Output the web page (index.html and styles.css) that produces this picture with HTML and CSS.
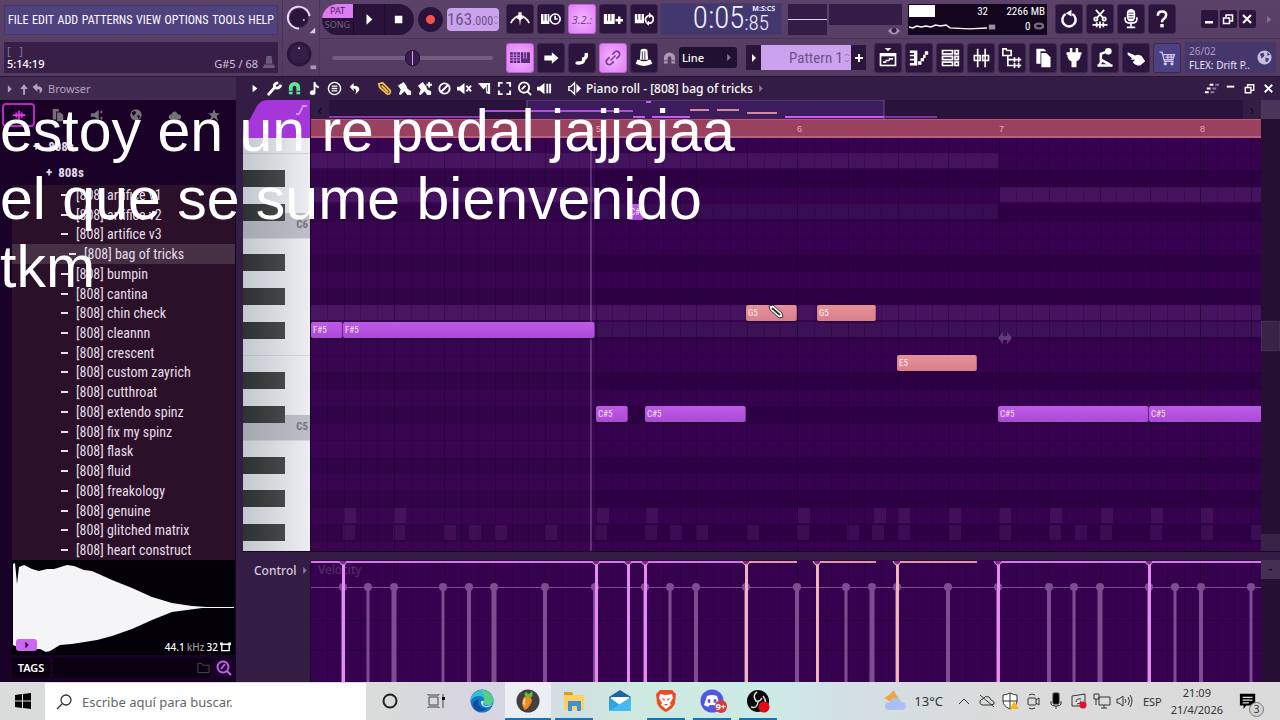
FILE: index.html
```
<!DOCTYPE html>
<html lang="es">
<head>
    <meta charset="utf-8">
    <title>Piano roll - [808] bag of tricks</title>
    <link rel="stylesheet" href="styles.css">
</head>
<body>
    <div class="desktop">
        <header class="toolbar">
            <div class="side">
                <nav class="menu">
                    <button>FILE</button><button>EDIT</button><button>ADD</button><button>PATTERNS</button><button>VIEW</button><button>OPTIONS</button><button>TOOLS</button><button>HELP</button>
                </nav>
                <div class="hint">
                    <div class="hint-brackets">[ &nbsp; ]</div>
                    <div class="hint-row">
                        <span class="hint-time">5:14:19</span>
                        <span>G#5 / 68</span>
                        <svg class="hint-hat" viewBox="0 0 14 18"><path d="M4 2h6l1 9H3zM1 12h12l1 4H0z"/></svg>
                    </div>
                </div>
            </div>
            <div class="knobs">
                <svg viewBox="0 0 38 38"><circle cx="17" cy="19" r="10" fill="#2a163d"/><path d="M17 30A11.500 11.500 0 1 1 28 17" fill="none" stroke="#e8dcf0" stroke-width="2"/><circle cx="22" cy="21" r="1" fill="#d9c9e6"/><path d="M34 29v6h-6z" fill="#d9c9e6"/></svg>
                <svg viewBox="0 0 38 38"><circle cx="17" cy="19" r="13" fill="#2a163d"/><circle cx="17" cy="19" r="10" fill="#341f47"/><circle cx="17" cy="13" r="1" fill="#d9c9e6"/><path d="M29 31h6v4h-6z" fill="#a593b5"/></svg>
            </div>
            <div class="main">
                <div class="row">
                    <div class="transport">
                        <div class="capsule">
                            <div class="mode"><button class="on">PAT</button><button>SONG</button></div>
                            <button aria-label="Play"><svg viewBox="0 0 24 24"><path d="M9 6l7 6.500L9 19z"/></svg></button>
                            <button aria-label="Stop"><svg viewBox="0 0 24 24"><path d="M7 8h9v9H7z"/></svg></button>
                        </div>
                        <button class="record" aria-label="Record"></button>
                        <button class="tempo" aria-label="Tempo">163<small>.000</small><svg viewBox="0 0 6 10"><path d="M1 3l2-2 2 2M1 7l2 2 2-2"/></svg></button>
                    </div>
                    <div class="buttons">
                        <button aria-label="Metronome"><svg viewBox="0 0 24 24"><path d="M1 17q4-8 11-9 7 1 11 9" fill="none" stroke="#fff" stroke-width="2"/><path d="M10 4h4v5l2 2-3 2-1 7-1-7-3-2 2-2z"/></svg></button>
                        <button aria-label="Wait for input"><svg viewBox="0 0 24 24"><path d="M0 6h3v8h1V6h3v8h1V6h2v12H0z"/><circle cx="17" cy="12" r="6" fill="#2b153d" stroke="#fff" stroke-width="2"/><path d="M17 8v4h3" fill="none" stroke="#fff" stroke-width="2"/></svg></button>
                        <button class="on lcd" aria-label="Countdown">3.2.:</button>
                        <button aria-label="Overdub"><svg viewBox="0 0 24 24"><path d="M1 6h4v8h1V6h3v8h1V6h4v12H1zM18 9h3v3h3v3h-3v3h-3v-3h-3v-3h3z"/></svg></button>
                        <button aria-label="Loop record"><svg viewBox="0 0 24 24"><path d="M1 6h3v7h1V6h3v7h1V6h3v11H1z"/><path d="M15 16a5 5 0 0 1 2-8h2M21 8a5 5 0 0 1-2 9h-2" fill="none" stroke="#fff" stroke-width="2"/><path d="M18 4l4 4-4 3zM18 14v6l-4-3z"/></svg></button>
                    </div>
                    <div class="time"><span class="time-big">0:05</span><span class="time-small"><small>M:S:CS</small>:85</span></div>
                    <div class="scope"></div>
                    <div class="meter"><div></div><svg viewBox="0 0 14 10"><path d="M0 5q7-8 14 0-7 8-14 0z"/><circle cx="7" cy="4" r="3" fill="#35204a"/></svg></div>
                    <div class="cpu">
                        <div class="cpu-graph"><i></i><svg viewBox="0 0 82 14"><path d="M0 8l4 1 4-2 5 1 5-1 5 1 5-2 5 1 6-1 4 3 20 1 20-1" fill="none" stroke="#fff" stroke-width="1.500"/></svg></div>
                        <div class="cpu-nums"><span>32</span><span>2266 MB</span><svg viewBox="0 0 10 10"><path d="M1 2h8v6H1z"/></svg><span>0 <svg viewBox="0 0 14 10"><ellipse cx="7" cy="5" rx="5" ry="3" fill="none" stroke="#786a80" stroke-width="3"/></svg></span></div>
                    </div>
                    <div class="buttons">
                        <button aria-label="Undo"><svg viewBox="0 0 24 24"><path d="M8 6a8 8 0 1 0 8 0" fill="none" stroke="#fff" stroke-width="3"/><path d="M15 1v8L8 5z"/></svg></button>
                        <button aria-label="Cut"><svg viewBox="0 0 24 24"><path d="M7 1l9 10M17 1l-9 10" stroke="#fff" stroke-width="2"/><circle cx="7" cy="12" r="2" fill="none" stroke="#fff" stroke-width="2"/><circle cx="17" cy="12" r="2" fill="none" stroke="#fff" stroke-width="2"/><path d="M3 19h18M8 16v6M12 15v8M16 16v6" stroke="#fff" stroke-width="2"/></svg></button>
                        <button aria-label="Record audio"><svg viewBox="0 0 24 24"><rect x="7" y="0" width="10" height="15" rx="5"/><path d="M5 10v3q0 4 7 4t7-4v-3M12 17v4M7 22h10" fill="none" stroke="#fff" stroke-width="2"/><path d="M9 5h6M9 8h6M9 11h6" stroke="#2b153d"/></svg></button>
                        <button aria-label="Help"><svg viewBox="0 0 24 24"><path d="M7 8q0-5 5-5t5 4q0 3-3 5-2 1-2 4" fill="none" stroke="#fff" stroke-width="3"/><path d="M10 18h4v4h-4z"/></svg></button>
                    </div>
                    <div class="winbtns">
                        <button aria-label="Minimize"><svg viewBox="0 0 16 16"><path d="M4 10h8v2.500H4z"/></svg></button>
                        <button aria-label="Restore"><svg viewBox="0 0 16 16"><path d="M3.500 7h6v5.500h-6zM6 6V4h6.500v6H10" fill="none" stroke="#fff" stroke-width="1.500"/></svg></button>
                        <button aria-label="Close"><svg viewBox="0 0 16 16"><path d="M4 4l8 8M12 4l-8 8" stroke="#fff" stroke-width="2"/></svg></button>
                    </div>
                    <svg class="more" viewBox="0 0 6 10"><path d="M1 1l4 4-4 4z"/></svg>
                </div>
                <div class="row">
                    <div class="transport"><input class="pitch" type="range" aria-label="Song position" value="50"></div>
                    <div class="buttons">
                        <button class="on" aria-label="Typing keyboard"><svg viewBox="0 0 24 24"><path d="M0 5h12v13H0zM13 5h3v8h1V5h2v8h1V5h4v13H13z" fill="#5a2a80"/><path d="M0 8.500h12M0 11.500h12M0 14.500h12M4 5v13M8 5v13" stroke="#e48cf8"/></svg></button>
                        <button aria-label="Step mode"><svg viewBox="0 0 24 24"><path d="M4 9h9V5l8 7-8 7v-4H4z"/></svg></button>
                        <button aria-label="Slide"><svg viewBox="0 0 24 24"><path d="M8 18q7 0 6-5 4-1 3-7" fill="none" stroke="#fff" stroke-width="4"/><ellipse cx="7" cy="18" rx="3" ry="2"/></svg></button>
                        <button class="on" aria-label="Link"><svg viewBox="0 0 24 24"><path d="M9 15l6-6M11 8l3-3a3.500 3.500 0 0 1 5 5l-3 3M13 16l-3 3a3.500 3.500 0 0 1-5-5l3-3" fill="none" stroke="#7a3d9a" stroke-width="2"/></svg></button>
                        <button aria-label="Hat"><svg viewBox="0 0 24 24"><path d="M8 2q4-2 8 0l1 12H7z"/><path d="M4 14h2q6 4 12 0h2l2 5q-10 5-20 0z"/><path d="M10 4v10M13 4v10" stroke="#2b153d"/></svg></button>
                    </div>
                    <svg class="snap-icon" viewBox="0 0 14 14"><path d="M3 13V7a4 4 0 0 1 8 0v6" fill="none" stroke="#aa9ab8" stroke-width="4"/><path d="M1 10h4M9 10h4" stroke="#503a62"/></svg>
                    <label class="snap"><select aria-label="Snap"><option>Line</option></select><svg viewBox="0 0 6 10"><path d="M1 1l4 4-4 4z"/></svg></label>
                    <div class="pattern">
                        <button aria-label="Pattern menu"><svg viewBox="0 0 6 10"><path d="M1 1l4 4-4 4z"/></svg></button>
                        <select aria-label="Pattern"><option>Pattern 1</option></select>
                        <svg class="spin" viewBox="0 0 6 10"><path d="M1 3l2-2 2 2M1 7l2 2 2-2"/></svg>
                        <button aria-label="Add pattern"><svg class="plus" viewBox="0 0 8 8"><path d="M3 0h2v3h3v2H5v3H3V5H0V3h3z"/></svg></button>
                    </div>
                    <div class="buttons">
                        <button aria-label="Playlist"><svg viewBox="0 0 24 24"><path d="M8 0h8l-4 4zM2 6h20v16H2z"/><path d="M4 10h16v10H4z" fill="#2b153d"/><path d="M6 17h4M9 15h5M13 13h5" stroke="#fff" stroke-width="2"/></svg></button>
                        <button aria-label="Piano roll"><svg viewBox="0 0 24 24"><path d="M1 3h9v18H1v-3h5v-3H1v-2h5v-3H1V8h5V6H1z"/><path d="M11 18h4M14 14h4M17 10h3M19 6h4" stroke="#fff" stroke-width="4"/></svg></button>
                        <button aria-label="Channel rack"><svg viewBox="0 0 24 24"><path d="M3 3h12v4H3zM3 10h12v4H3zM3 17h12v4H3zM18 3h4v4h-4zM18 10h4v4h-4zM18 17h4v4h-4z" fill="none" stroke="#fff" stroke-width="2"/></svg></button>
                        <button aria-label="Mixer"><svg viewBox="0 0 24 24"><path d="M8 1v22M17 1v22" stroke="#fff" stroke-width="2"/><path d="M4 9h7v6H4zM14 9h7v6h-7z" fill="#2b153d" stroke="#fff" stroke-width="2"/><path d="M8 9v6M17 9v6" stroke="#fff" stroke-width="2"/></svg></button>
                        <button aria-label="Browser"><svg viewBox="0 0 24 24"><path d="M1 1h4l1 2h5v6H1zM7 9v12h5M7 14h5" fill="none" stroke="#fff" stroke-width="2"/><path d="M12 14h11M12 21h11M15 11v6M20 11v6M15 18v6M20 18v6" stroke="#fff" stroke-width="2"/></svg></button>
                        <button aria-label="Project picker"><svg viewBox="0 0 24 24"><path d="M4 1h9l3 3H9v15H4z"/><path d="M10 6h6l5 5v12H10z"/></svg></button>
                        <button aria-label="Plugins"><svg viewBox="0 0 24 24"><path d="M7 0h3v5h4V0h3v5h4v3h-1q0 6-5 8v7H9v-7q-5-2-5-8H3V5h4z"/></svg></button>
                        <button aria-label="Tempo tapper"><svg viewBox="0 0 24 24"><circle cx="16" cy="4" r="4"/><path d="M15 4L7 7v7l11 6" fill="none" stroke="#fff" stroke-width="3"/><path d="M8 15l-3 6M3 21h18" fill="none" stroke="#fff" stroke-width="3"/></svg></button>
                        <button aria-label="Touch"><svg viewBox="0 0 24 24"><path d="M2 5l9 4q5-2 8 1l4 6-6 5q-6 0-9-4l3-3H6l1-2-5-4z"/></svg></button>
                        <button class="blue" aria-label="Shop"><svg viewBox="0 0 24 24"><path d="M3 5h3l3 11h11M7 8h14l-2 6H9M10 11h10M13 8v6M17 8v6" fill="none" stroke="#d0c8f0" stroke-width="1.500"/><circle cx="10" cy="19" r="2" fill="#d0c8f0"/><circle cx="18" cy="19" r="2" fill="#d0c8f0"/></svg></button>
                    </div>
                    <div class="news"><div><span>26/02</span><b>FLEX: Drift P..</b></div><svg viewBox="0 0 16 16"><circle cx="8" cy="8" r="7.500"/><path d="M3 4l4-1 1 3-3 3zM9 8l4 1-2 4-2-1zM11 2l3 3-3 1z" fill="#4a3c78"/></svg></div>
                </div>
            </div>
        </header>

        <main class="work">
            <aside class="browser">
                <div class="browser-head">
                    <svg viewBox="0 0 40 12"><path d="M2 2l4 4-4 4z"/><path d="M18 12V6h-3l4-5 4 5h-3v6zM28 4l5-4v3q6 0 5 5l-3 3q2-5-2-5v3z"/></svg>
                    <span>Browser</span>
                </div>
                <div class="browser-body">
                    <div class="tabs">
                        <button class="on" aria-label="All"><svg viewBox="0 0 16 16"><path d="M1 8h14M5 5v6M8 3v10M11 5v6" stroke="#e838ec" stroke-width="2"/></svg></button>
                        <button aria-label="Project"><svg viewBox="0 0 16 16"><path d="M2 1h7v3H6v9H2z"/><path d="M7 5h4l3 3v7H7z"/></svg></button>
                        <button aria-label="Sounds"><svg viewBox="0 0 16 16"><path d="M1 6h4l5-4v12l-5-4H1zM12 3h2v3h-2zM12 10h2v3h-2z"/></svg></button>
                        <button aria-label="Online"><svg viewBox="0 0 16 16"><circle cx="8" cy="8" r="6.500"/><path d="M3 5l4-2 1 3-3 3zM9 8l4 1-2 4z" fill="#14001f"/></svg></button>
                        <button aria-label="Cloud"><svg viewBox="0 0 16 16"><path d="M3 13q-3-1-2-4 1-2 3-2 2-5 6-2 1 1 1 2 4 0 4 3t-3 3z"/></svg></button>
                        <button aria-label="Starred"><svg viewBox="0 0 16 16"><path d="M8 1l2 5h5l-4 3 2 6-5-4-5 4 2-6-4-3h5z"/></svg></button>
                    </div>
                    <div class="folder folder-root">+ &nbsp; 808s</div>
                    <div class="folder">+ &nbsp;808s</div>
                    <ul class="files">
                        <li><a href="#">[808] artifice v1</a></li>
                        <li><a href="#">[808] artifice v2</a></li>
                        <li><a href="#">[808] artifice v3</a></li>
                        <li class="selected"><a href="#">[808] bag of tricks</a></li>
                        <li><a href="#">[808] bumpin</a></li>
                        <li><a href="#">[808] cantina</a></li>
                        <li><a href="#">[808] chin check</a></li>
                        <li><a href="#">[808] cleannn</a></li>
                        <li><a href="#">[808] crescent</a></li>
                        <li><a href="#">[808] custom zayrich</a></li>
                        <li><a href="#">[808] cutthroat</a></li>
                        <li><a href="#">[808] extendo spinz</a></li>
                        <li><a href="#">[808] fix my spinz</a></li>
                        <li><a href="#">[808] flask</a></li>
                        <li><a href="#">[808] fluid</a></li>
                        <li><a href="#">[808] freakology</a></li>
                        <li><a href="#">[808] genuine</a></li>
                        <li><a href="#">[808] glitched matrix</a></li>
                        <li><a href="#">[808] heart construct</a></li>
                    </ul>
                    <div class="preview">
                        <svg viewBox="0 0 223 95" preserveAspectRatio="none"><path d="M1 85V4l2-1 2 21 2-17 5-2 8 4 7 2 8-2h7l13-4 7 1 10 4 8 1 20 9 20 8 20 9 20 6 20 3 15 1h27v1h-32l-30 4-20 8-20 9-20 7-15 4-25 4-12 1-10 6-4 1-6-3H10z"/></svg>
                        <button class="preview-play" aria-label="Play sample"><svg viewBox="0 0 6 10"><path d="M1 1l4 4-4 4z"/></svg></button>
                        <span class="preview-info">44.1 <i>kHz</i> 32 <svg viewBox="0 0 12 10"><path d="M2 2h8v7H2z" fill="none" stroke="#fff" stroke-width="1.500"/><path d="M0 0h3v3H0zM9 0h3v3H9z"/></svg></span>
                    </div>
                    <div class="tags">
                        <b>TAGS</b>
                        <div><svg viewBox="0 0 14 12"><path d="M1 1h4l1 2h7v8H1z" fill="none" stroke="#55485f"/></svg></div>
                        <button aria-label="Search"><svg viewBox="0 0 16 16"><circle cx="7" cy="7" r="5.500" fill="none" stroke="#c45df0" stroke-width="2"/><path d="M5 9l4-5M11 11l4 4" stroke="#c45df0" stroke-width="2"/></svg></button>
                    </div>
                </div>
            </aside>

            <section class="roll">
                <div class="roll-head">
                    <div class="tools">
                        <button aria-label="Menu"><svg viewBox="0 0 16 16"><path d="M6 4l5 4-5 4z"/></svg></button>
                        <button aria-label="Tools"><svg viewBox="0 0 16 16"><path d="M1 15l7-8M8 7q-1-5 4-5M8 7q5 2 7-3" fill="none" stroke="#fff" stroke-width="3"/></svg></button>
                        <button aria-label="Snap"><svg viewBox="0 0 16 16"><path d="M4 14V7a4 4 0 0 1 8 0v7" fill="none" stroke="#5fe890" stroke-width="4"/><path d="M2 11h4M10 11h4" stroke="#341d45"/></svg></button>
                        <button aria-label="Stamp"><svg viewBox="0 0 16 16"><path d="M7 1h2q0 3 4 5l-1 2-3-2v6a3 2.500 0 1 1-2-2z"/></svg></button>
                        <button aria-label="Options"><svg viewBox="0 0 16 16"><circle cx="8" cy="8" r="6.500" fill="none" stroke="#fff" stroke-width="1.500"/><path d="M5 5.500h6M5 8h6M5 10.500h6" stroke="#fff" stroke-width="1.500"/></svg></button>
                        <button aria-label="Undo"><svg viewBox="0 0 16 16"><path d="M3 6l4-4v3q7 0 6 5l-4 4q2-6-2-6v3z"/></svg></button>
                        <button class="gap" aria-label="Draw"><svg viewBox="0 0 16 16"><path d="M2 3l4-1 8 8q1 4-3 4L3 7z" fill="none" stroke="#f2bd42" stroke-width="2"/><path d="M5 5l7 7" stroke="#f2bd42" stroke-width="2"/></svg></button>
                        <button aria-label="Paint"><svg viewBox="0 0 16 16"><path d="M1 5l6-4 3 4 1 3 4 3v4h-4l-3-4-4 4-2-1 2-5z"/></svg></button>
                        <button aria-label="Paint sequence"><svg viewBox="0 0 16 16"><path d="M1 5l5-4 4 5 1 3 4 2v4h-4l-3-4-4 4-2-1 2-5zM12 1h2v2h2v2h-2v2h-2V5h-2V3h2z"/></svg></button>
                        <button aria-label="Delete"><svg viewBox="0 0 16 16"><circle cx="8" cy="8" r="5.500" fill="none" stroke="#fff" stroke-width="2"/><path d="M4 12l8-8" stroke="#fff" stroke-width="2"/></svg></button>
                        <button aria-label="Mute"><svg viewBox="0 0 16 16"><path d="M0 6h3l5-4v12l-5-4H0z"/><path d="M10 5l5 6M15 5l-5 6" stroke="#fff" stroke-width="2"/></svg></button>
                        <button aria-label="Slice"><svg viewBox="0 0 16 16"><path d="M1 2h13v12l-4-1-1-7-2 3z"/><path d="M11 4v7" stroke="#341d45"/></svg></button>
                        <button aria-label="Select"><svg viewBox="0 0 16 16"><path d="M2 6V2h4M10 2h4v4M14 10v4h-4M6 14H2v-4" fill="none" stroke="#fff" stroke-width="2"/></svg></button>
                        <button aria-label="Zoom"><svg viewBox="0 0 16 16"><circle cx="7.500" cy="7" r="5.500" fill="none" stroke="#fff" stroke-width="2"/><path d="M5 9l4-4M11 11l4 4" stroke="#fff" stroke-width="2"/></svg></button>
                        <button aria-label="Playback"><svg viewBox="0 0 16 16"><path d="M0 6h3l5-4v12l-5-4H0zM10 3h2v10h-2zM13 3h2v10h-2z"/></svg></button>
                        <button class="speaker" aria-label="Channel"><svg viewBox="0 0 16 16"><path d="M2 6h2l4-4v12l-4-4H2z" fill="none" stroke="#fff" stroke-width="1.500"/><path d="M10 3l5 5-5 5z"/></svg></button>
                    </div>
                    <h1>Piano roll - [808] bag of tricks</h1>
                    <svg class="more" viewBox="0 0 6 10"><path d="M1 1l4 4-4 4z"/></svg>
                    <div class="roll-win">
                        <svg viewBox="0 0 16 16"><path d="M1 12h4M3 8h4M6 4h4" stroke="#fff" stroke-width="2"/><path d="M7 12h4M9 8h4M12 4h4" stroke="#8d7a9a" stroke-width="2"/></svg>
                        <button aria-label="Minimize"><svg viewBox="0 0 16 16"><path d="M4 5h8v2H4z"/></svg></button>
                        <button aria-label="Restore"><svg viewBox="0 0 16 16"><path d="M3.500 7h6v5.500h-6zM6 6V4h6.500v6H10" fill="none" stroke="#fff" stroke-width="1.500"/></svg></button>
                        <button aria-label="Close"><svg viewBox="0 0 16 16"><path d="M4 4l8 8M12 4l-8 8" stroke="#fff" stroke-width="2"/></svg></button>
                    </div>
                </div>
                <div class="roll-body">
                    <div class="keys-col">
                        <svg class="corner" viewBox="0 0 67 38"><path d="M0 38V32L14 6Q18 0 24 0H67V38z" fill="#a537da"/><path d="M53 14h3l4-8h4" fill="none" stroke="#d48cf0" stroke-width="2"/></svg>
                        <div class="keys" id="keys"></div>
                    </div>
                    <div class="lane">
                        <div class="overview"><button aria-label="Scroll left">‹</button><svg id="overview"></svg><button aria-label="Scroll right">›</button></div>
                        <div class="ruler" id="ruler"></div>
                        <div class="grid" id="grid"></div>
                    </div>
                    <div class="scroll"><b></b><span></span><i></i><em></em></div>
                </div>
                <div class="control">
                    <div class="control-name"><button>Control</button><svg class="more" viewBox="0 0 6 10"><path d="M1 1l4 4-4 4z"/></svg></div>
                    <div class="velocity" id="velocity"><span>Velocity</span></div>
                    <div class="control-scroll"><b>-</b></div>
                </div>
            </section>
        </main>

        <footer class="taskbar">
            <button class="start" aria-label="Inicio"><svg viewBox="0 0 16 16"><path d="M0 2l7-1v6.500H0zM8 1l8-1v7.500H8zM0 8.500h7V15l-7-1zM8 8.500h8V16l-8-1z"/></svg></button>
            <label class="search"><svg viewBox="0 0 16 16"><circle cx="10" cy="6" r="5" fill="none" stroke="#333" stroke-width="1.300"/><path d="M6 10l-5 5" stroke="#333" stroke-width="1.300"/></svg><input type="text" placeholder="Escribe aquí para buscar." aria-label="Buscar"></label>
            <div class="apps">
                <button aria-label="Cortana"><svg viewBox="0 0 24 24"><circle cx="12" cy="12" r="6.500" fill="none" stroke="#222" stroke-width="2"/></svg></button>
                <button aria-label="Vista de tareas"><svg viewBox="0 0 24 24"><path d="M5 8h9v8H5zM4 5v1h11V5M4 19v-1h11v1M19 5v14" fill="none" stroke="#444"/><path d="M18 8h3v3h-3z" fill="#111"/></svg></button>
                <button aria-label="Edge"><svg viewBox="0 0 24 24"><circle cx="12" cy="12" r="11.500" fill="#1479c8"/><path d="M1 9Q4 0 13 1q10 2 10 10 0 6-7 5-4-1-2-3 1-6-5-6-5 0-8 4z" fill="#35c1c8"/><path d="M14 1q10 3 9 11-1 5-8 4l-1-3q2-6-2-12z" fill="#53d287"/><path d="M9 10q-3 9 8 10-10 6-14-3-1-5 6-7z" fill="#0e4f9e"/><path d="M14 12q-3 5 3 5 4 0 6-3-2 4-6 4-6 0-6-6z" fill="#eef"/></svg></button>
                <button class="active running" aria-label="FL Studio"><svg viewBox="0 0 24 24"><circle cx="12" cy="12" r="11.500" fill="#41413f"/><path d="M8 8q4-2 7 1 2 3-1 7-2 4-5 5-2-2-3-6 0-4 2-7z" fill="#f48a1f"/><path d="M9 10q-2 3 0 6" fill="none" stroke="#ffd28a" stroke-width="2"/><path d="M10 8Q7 5 10 3l3 2 3-3q2 5-2 7z" fill="#72b83c"/></svg></button>
                <button class="running" aria-label="Explorador"><svg viewBox="0 0 24 24"><path d="M2 4h8l2 2h10v15H2z" fill="#fbd25f"/><path d="M2 3h8l1 3H2z" fill="#d99a26"/><path d="M6 12h13v10h-4v-5h-5v5H6z" fill="#3f8fd8"/></svg></button>
                <button aria-label="Correo"><svg viewBox="0 0 24 24"><path d="M1 8l11-7 11 7v3H1z" fill="#1766a8"/><path d="M3 8h18v8H3z" fill="#fff"/><path d="M1 8l11 8 11-8v14H1z" fill="#2aa5e4"/><path d="M1 22L23 8v14z" fill="#46b9ee"/></svg></button>
                <button class="running" aria-label="Brave"><svg viewBox="0 0 24 24"><path d="M6 1h12l4 4-1 9q-1 5-9 9-8-4-9-9L2 5z" fill="#f04a24"/><path d="M6 5l6 1 6-1 1 4-3 5 1 2-5 4-5-4 1-2-3-5z" fill="#fff"/><path d="M8 9l3 1-1 2zM16 9l-3 1 1 2zM10 15h4l-2 2z" fill="#f04a24"/></svg></button>
                <button class="running" aria-label="Discord"><svg viewBox="0 0 24 24"><circle cx="12" cy="12" r="11.500" fill="#5158e0"/><path d="M7 7q5-2 10 0l3 9-4 2-2-2h-4l-2 2-4-2z" fill="#fff"/><ellipse cx="9" cy="12" rx="1.500" ry="2" fill="#5158e0"/><ellipse cx="15" cy="12" rx="1.500" ry="2" fill="#5158e0"/></svg><em>9+</em></button>
                <button class="running" aria-label="OBS"><svg viewBox="0 0 24 24"><circle cx="12" cy="12" r="11" fill="#090909"/><path d="M11 3q-5 3-1 9 4 1 6-3M5 18q6 2 7-5M17 7q5 6 0 12" fill="none" stroke="#ddd" stroke-width="1.500"/><circle cx="18" cy="18" r="5.500" fill="#e50914"/></svg></button>
            </div>
            <div class="tray">
                <button class="weather"><svg viewBox="0 0 24 24"><path d="M11 1l2 5q4 2 2 7L6 12 1 9l5-3z" fill="#f0a63a"/><path d="M6 21q-5-1-4-5 1-3 5-3 2-5 7-4 4 1 4 4 5 0 5 4t-5 4z" fill="#a9c0f2"/></svg>13°C</button>
                <svg viewBox="0 0 18 18"><path d="M4 12l5-5 5 5"/></svg>
                <svg viewBox="0 0 18 18"><path d="M4 13q-3-1-2-4 1-2 3-2 2-4 6-2l2 3q4 1 3 4l-3 1zM2 3l14 12"/></svg>
                <svg viewBox="0 0 18 18"><path d="M9 1q4 2 7 2v6q0 5-7 8-7-3-7-8V3q3 0 7-2z" fill="#fff"/><path d="M9 1v16M2 9h14"/><path d="M13 9l5 8H9z" fill="#f5b715" stroke="none"/></svg>
                <svg viewBox="0 0 18 18"><rect x="4" y="6" width="8" height="7" rx="1"/><path d="M12 8l3-2v7l-3-2M5 3q3-2 6 0M5 16q3 2 6 0"/></svg>
                <svg viewBox="0 0 18 18"><rect x="6" y="1" width="6" height="11" rx="1" fill="#000"/><path d="M4 9v3q0 2 5 2t5-2V9M9 14v3"/></svg>
                <svg viewBox="0 0 18 18"><path d="M2 4l13-2v12H2zM6 10q0-4 5-3M11 9q0 3-4 3"/><circle cx="13" cy="13" r="3.500" fill="#e0122a" stroke="none"/></svg>
                <svg viewBox="0 0 18 18"><path d="M6 5h11v8H6zM11 13v3M8 16h6M1 2h5v5H1zM3 7v6"/></svg>
                <svg viewBox="0 0 18 18"><path d="M1 7h2l4-3v10l-4-3H1zM9 7q2 2 0 4M12 5q3 4 0 8M14 3q4 6 0 12"/></svg>
                <span class="lang">ESP</span>
                <div class="clock"><span>21:09</span><span>21/4/2026</span></div>
                <button class="notif" aria-label="Notificaciones"><svg viewBox="0 0 20 20"><path d="M1 2h17v13H8l-3 4v-4H1z" fill="#000" stroke="none"/><path d="M4 6h11M4 9h11M4 12h7" stroke="#ddd" stroke-width="1.500"/></svg><em>3</em></button>
            </div>
        </footer>
    </div>

    <p class="caption">estoy en un re pedal jajjajaa<br>el que se sume bienvenido<br>tkm</p>

    <script src="roll.js"></script>
</body>
</html>
```
FILE: styles.css
```
* {
    box-sizing: border-box;
}

body {
    margin: 0;
    font-family: "Noto Sans", "Open Sans", sans-serif;
    font-size: 11px;
    color: #fff;
    background: #341d45;
    overflow: hidden;
}

button, select, input {
    font: inherit;
    color: inherit;
    background: none;
    border: none;
    padding: 0;
    margin: 0;
}

svg {
    display: block;
    flex: none;
    fill: #fff;
}

.desktop {
    display: flex;
    flex-direction: column;
    height: 100vh;
}

/* top toolbar */
.toolbar {
    display: flex;
    height: 77px;
    background: linear-gradient(#5a4269, #523a61);
    border-bottom: 1px solid #2a1538;
}

.side {
    width: 282px;
    padding: 5px 4px 3px;
    display: flex;
    flex-direction: column;
    gap: 7px;
}

.menu {
    display: flex;
    justify-content: space-between;
    height: 30px;
    padding: 0 3px;
    background: #50427e;
    border: 1px solid #463768;
    font-family: "Liberation Sans Narrow", "Roboto Condensed", "Liberation Sans", sans-serif;
    font-size: 12px;
}

.hint {
    height: 31px;
    padding: 2px 3px;
    background: #371f47;
    color: #cfc3d8;
    line-height: 14px;
}

.hint-brackets {
    color: #8a7697;
    height: 13px;
}

.hint-row {
    display: flex;
    gap: 5px;
}

.hint-time {
    flex: 1;
    color: #fff;
    font-weight: 500;
}

.hint-hat {
    width: 12px;
    height: 16px;
    margin-top: -3px;
    fill: #6d5a7c;
}

.knobs {
    width: 38px;
    border-left: 1px solid #4a3358;
    border-right: 1px solid #4a3358;
}

.main {
    flex: 1;
    min-width: 0;
}

.row {
    display: flex;
    align-items: center;
    height: 38px;
}

.row + .row {
    border-top: 1px solid #4a3358;
}

.transport {
    display: flex;
    align-items: center;
    gap: 4px;
    width: 186px;
    padding-left: 2px;
}

.capsule {
    display: flex;
    height: 31px;
    width: 92px;
    border-radius: 16px;
    overflow: hidden;
    background: #29133a;
}

.capsule > button {
    flex: 1;
    display: flex;
    align-items: center;
    justify-content: center;
    border-left: 1px solid #1e0c2c;
}

.capsule svg {
    width: 20px;
    height: 20px;
}

.mode {
    width: 31px;
    display: flex;
    flex-direction: column;
    font-size: 9px;
    line-height: 13px;
    color: #75627f;
}

.mode .on {
    height: 14px;
    background: #e07cf2;
    color: #4a1c5c;
}

.record {
    width: 25px;
    height: 25px;
    border-radius: 50%;
    background: radial-gradient(#f4544e 4px, #29133a 5px);
}

.tempo {
    display: flex;
    align-items: baseline;
    justify-content: center;
    width: 52px;
    height: 23px;
    border-radius: 4px;
    background: #caa2ee;
    color: #6d5288;
    font-family: "Liberation Sans Narrow", "Roboto Condensed", "Liberation Sans", sans-serif;
    font-size: 17px;
    line-height: 23px;
}

.tempo small {
    font-size: 12px;
}

.tempo svg, .spin {
    width: 6px;
    height: 10px;
    fill: none;
    stroke: #9478b0;
}

.buttons {
    display: flex;
    gap: 3px;
}

.buttons button {
    width: 28px;
    height: 30px;
    display: flex;
    align-items: center;
    justify-content: center;
    background: #2b153d;
    border: 1px solid #3e2750;
    border-radius: 3px;
}

.buttons svg {
    width: 20px;
    height: 20px;
}

.buttons .on {
    background: radial-gradient(#f5b6ff, #e07cf6);
    border-color: #c060dc;
}

.buttons .blue {
    background: #4d4186;
}

.buttons .lcd {
    font-size: 11px;
    font-style: italic;
    color: #7a3d96;
}

.time {
    display: flex;
    align-items: flex-end;
    justify-content: flex-end;
    width: 122px;
    height: 32px;
    margin-left: 2px;
    padding-right: 12px;
    background: #42386f;
    border: 1px solid #4c3c6c;
    font-family: "Liberation Sans Narrow", "Roboto Condensed", "Liberation Sans", sans-serif;
    font-weight: 300;
    color: #f4efff;
}

.time-big {
    font-size: 31px;
    line-height: 32px;
}

.time-small {
    display: flex;
    flex-direction: column;
    font-size: 21px;
    line-height: 21px;
}

.time-small small {
    font: bold 7px/8px "Noto Sans", sans-serif;
    padding-left: 8px;
    margin-right: -9px;
}

.scope {
    width: 39px;
    height: 31px;
    margin: 0 2px 0 6px;
    background: linear-gradient(#dfd2ea, #dfd2ea) 0 15px / 100% 1px no-repeat #331d46;
}

.meter {
    width: 73px;
    height: 31px;
}

.meter div {
    height: 21px;
    background: #331d46;
}

.meter svg {
    width: 12px;
    height: 10px;
    margin: 1px 2px 0 auto;
    fill: #a898b4;
}

.cpu {
    display: flex;
    width: 139px;
    height: 31px;
    margin: 0 8px 0 6px;
    background: #14051f;
}

.cpu-graph {
    width: 60px;
    padding: 1px;
}

.cpu-graph i {
    display: block;
    width: 26px;
    height: 12px;
    background: #fff;
}

.cpu-graph svg {
    width: 78px;
    height: 14px;
    margin-top: 2px;
}

.cpu-nums {
    flex: 1;
    display: grid;
    grid-template-columns: 20px 1fr;
    align-items: center;
    justify-items: end;
    padding-right: 2px;
    font-family: "Liberation Sans Narrow", "Roboto Condensed", "Liberation Sans", sans-serif;
    font-size: 11px;
}

.cpu-nums svg {
    display: inline-block;
    width: 12px;
    height: 8px;
    fill: #9a90a4;
    margin-right: -10px;
}

.cpu-nums span svg {
    margin-right: 0;
}

.winbtns {
    display: flex;
    gap: 2px;
    margin-left: 25px;
}

.winbtns button {
    width: 17px;
    height: 18px;
    background: #2b153d;
    border-radius: 2px;
}

.winbtns svg {
    width: 16px;
    height: 16px;
}

.more {
    width: 6px;
    height: 9px;
    fill: #88759a;
}

.row > .more {
    margin-left: 10px;
}

.pitch {
    appearance: none;
    width: 161px;
    height: 4px;
    margin-left: 10px;
    border-radius: 2px;
    background: #715d80;
}

.pitch::-webkit-slider-thumb {
    appearance: none;
    width: 15px;
    height: 16px;
    border-radius: 7px;
    border: 1px solid #20102f;
    background: linear-gradient(90deg, #3a1c52 6px, #c9a8dd 6px, #c9a8dd 7px, #3a1c52 7px);
}

.snap-icon {
    width: 13px;
    height: 14px;
    margin: 0 3px 0 5px;
}

.snap {
    display: flex;
    align-items: center;
    width: 58px;
    height: 21px;
    padding: 0 5px 0 3px;
    background: #211030;
    border-radius: 3px;
    font-weight: 500;
}

.snap svg {
    width: 6px;
    height: 9px;
    fill: #88759a;
}

select {
    appearance: none;
    flex: 1;
    min-width: 0;
}

.pattern {
    display: flex;
    align-items: center;
    width: 120px;
    height: 25px;
    margin: 0 8px 0 9px;
    background: #caa2ee;
    border-radius: 3px;
}

.pattern button {
    display: flex;
    align-items: center;
    justify-content: center;
    width: 15px;
    height: 25px;
    background: #2b153d;
}

.pattern button svg {
    width: 6px;
    height: 10px;
}

.pattern .plus {
    width: 8px;
    height: 8px;
}

.pattern select {
    text-align: right;
    color: #6d5288;
    font-family: "Liberation Sans Narrow", "Roboto Condensed", "Liberation Sans", sans-serif;
    font-size: 15px;
}

.spin {
    margin: 0 1px;
}

.news {
    display: flex;
    align-items: center;
    flex: 1;
    height: 31px;
    margin: 0 4px;
    padding: 0 4px;
    background: #45366c;
    line-height: 14px;
    min-width: 0;
}

.news div {
    flex: 1;
    min-width: 0;
    white-space: nowrap;
}

.news span, .news b {
    display: block;
    font-size: 10px;
    font-weight: 400;
    color: #a99cc4;
}

.news b {
    color: #ece5f8;
}

.news svg {
    width: 15px;
    height: 15px;
    fill: #c9bfdc;
}

/* browser */
.work {
    flex: 1;
    display: flex;
    gap: 7px;
    min-height: 0;
}

.browser {
    width: 236px;
    display: flex;
    flex-direction: column;
}

.browser-head {
    display: flex;
    align-items: center;
    gap: 4px;
    height: 23px;
    padding-left: 6px;
    background: #402a50;
    color: #b3a4be;
}

.browser-head svg {
    width: 38px;
    height: 12px;
    fill: #b3a4be;
}

.browser-body {
    flex: 1;
    display: flex;
    flex-direction: column;
    min-height: 0;
    padding: 0 1px 1px 0;
    background: #180027;
}

.tabs {
    display: flex;
    gap: 7px;
    padding: 3px 2px 0;
    height: 34px;
}

.tabs button {
    width: 32px;
    height: 24px;
    display: flex;
    align-items: center;
    justify-content: center;
    border-radius: 4px;
}

.tabs .on {
    width: 33px;
    border: 2px solid #b928bd;
}

.tabs svg {
    width: 14px;
    height: 14px;
    fill: #777078;
}

.folder {
    height: 25px;
    padding-left: 46px;
    font: bold 13px/25px "Liberation Sans Narrow", "Roboto Condensed", "Liberation Sans", sans-serif;
    color: #e3dce8;
}

.folder-root {
    padding-left: 33px;
    height: 26px;
}

.files {
    flex: 1;
    display: grid;
    grid-auto-rows: 1fr;
    min-height: 0;
    margin: 0 0 0 12px;
    padding: 0;
    list-style: none;
    background: #2a1029;
    font-family: "Liberation Sans Narrow", "Roboto Condensed", "Liberation Sans", sans-serif;
    font-size: 14px;
}

.files li {
    display: flex;
    align-items: center;
    gap: 8px;
    min-height: 0;
    padding-left: 49px;
}

.files li::before {
    content: "";
    width: 7px;
    height: 2px;
    background: #e6dfe8;
}

.files .selected {
    padding-left: 57px;
    background: #453044;
}

.files a {
    color: #e6dfe8;
    text-decoration: none;
    white-space: nowrap;
}

.preview {
    position: relative;
    height: 95px;
    margin-left: 12px;
    background: #030008;
}

.preview > svg {
    width: 100%;
    height: 95px;
    fill: #f5f5f8;
}

.preview-play {
    position: absolute;
    left: 4px;
    bottom: 4px;
    width: 21px;
    height: 12px;
    border-radius: 3px;
    background: #cb66f2;
}

.preview-play svg {
    height: 8px;
    width: 6px;
    margin: 0 auto;
    fill: #200030;
}

.preview-info {
    position: absolute;
    right: 4px;
    bottom: 0;
    display: flex;
    align-items: center;
    gap: 2px;
    font-size: 10px;
    font-weight: 500;
    line-height: 16px;
}

.preview-info i {
    font-style: normal;
    color: #999;
}

.preview-info svg {
    width: 11px;
    height: 10px;
}

.tags {
    display: flex;
    align-items: center;
    gap: 3px;
    height: 26px;
    margin-left: 12px;
    padding: 3px 0;
}

.tags b, .tags div {
    height: 20px;
    background: #0b0012;
    line-height: 20px;
}

.tags b {
    width: 38px;
    text-align: center;
    font-weight: 600;
}

.tags div {
    flex: 1;
    display: flex;
    align-items: center;
    justify-content: flex-end;
    padding-right: 1px;
}

.tags svg {
    width: 13px;
    height: 12px;
}

.tags button {
    padding: 0 3px 0 2px;
}

.tags button svg {
    width: 16px;
    height: 16px;
}

/* piano roll */
.roll {
    flex: 1;
    display: flex;
    flex-direction: column;
    min-width: 0;
}

.roll-head {
    display: flex;
    align-items: center;
    height: 23px;
    padding: 0 4px;
    background: #341d45;
}

.tools {
    display: flex;
    gap: 4px;
}

.tools svg, .roll-win svg {
    width: 15px;
    height: 15px;
}

.tools button {
    width: 16px;
}

.tools .gap {
    margin-left: 10px;
}

.tools .speaker {
    margin-left: 10px;
}

.roll-head h1 {
    margin: 0 5px 0 3px;
    font-size: 12px;
    font-weight: 500;
    white-space: nowrap;
}

.roll-win {
    display: flex;
    gap: 4px;
    margin-left: auto;
}

.roll-body {
    flex: 1;
    display: flex;
    min-height: 0;
}

.keys-col {
    width: 67px;
    display: flex;
    flex-direction: column;
}

.corner {
    width: 67px;
    height: 38px;
}

.keys, .grid, .velocity, .ruler {
    position: relative;
    overflow: hidden;
}

.keys {
    flex: 1;
    background: linear-gradient(90deg, #c3c8ce, #eceef2);
}

.keys span {
    position: absolute;
    right: 2px;
    color: #73737c;
    font: bold 11px/14px "Roboto Condensed", "Liberation Sans", sans-serif;
}

.lane {
    flex: 1;
    display: flex;
    flex-direction: column;
    min-width: 0;
    border-left: 1px solid #1a0626;
}

.overview {
    display: flex;
    height: 19px;
    background: #29123b;
}

.overview button {
    width: 18px;
    background: #341d45;
    color: #160620;
    line-height: 16px;
    font-size: 14px;
}

.overview svg {
    flex: 1;
    height: 19px;
    min-width: 0;
}

.ruler {
    height: 19px;
    background: #9b4160;
    border-top: 1px solid #b35b72;
    border-bottom: 2px solid #b8627c;
}

.ruler span {
    position: absolute;
    top: 2px;
    color: #f0a8b8;
    font: 9px/14px "Liberation Sans", sans-serif;
}

.grid {
    flex: 1;
    background: #36024f;
}

.grid svg, .keys svg, .velocity svg {
    position: absolute;
    left: 0;
    top: 0;
    width: 100%;
    height: 100%;
}

.note {
    position: absolute;
    height: 16px;
    padding-left: 2px;
    border-radius: 2px;
    border-right: 1px solid #8433a8;
    background: linear-gradient(#bd5ce6, #ad48d8);
    box-shadow: 0 1px 2px #1d0030;
    font: 9px/16px "Roboto Condensed", "Liberation Sans", sans-serif;
    color: #f6e2ff;
}

.note-alt {
    background: linear-gradient(#e69299, #d9808a);
    border-color: #bb6673;
    color: #fff0f0;
}

.scroll, .control-scroll {
    width: 19px;
    background: #251034;
}

.scroll {
    display: grid;
    grid-template-rows: 19px 1fr 30px 200px;
}

.scroll b {
    background: #4b3659;
}

.scroll i {
    background: #382346;
    border: 1px solid #453153;
}

.scroll em {
    align-self: end;
    height: 17px;
    background: #382346;
}

.control {
    display: flex;
    height: 131px;
    padding-top: 8px;
    background: #341d45;
    border-top: 1px solid #1a0626;
}

.control-name {
    display: flex;
    gap: 6px;
    align-items: center;
    width: 67px;
    height: 20px;
    padding-left: 11px;
    font-size: 12px;
    font-weight: 500;
    color: #d6cbdf;
}

.velocity {
    flex: 1;
    background: #36024f;
    border-left: 1px solid #1a0626;
}

.velocity span {
    position: absolute;
    left: 7px;
    top: 1px;
    font-size: 12px;
    color: #5d2f70;
}

.control-scroll b {
    display: block;
    height: 19px;
    background: #44304f;
    text-align: center;
    line-height: 16px;
    color: #140520;
}

/* taskbar */
.taskbar {
    display: flex;
    height: 38px;
    background: linear-gradient(90deg, #d9dcda 30%, #d7d4e2 38%, #cdeae0 50%, #cdebe6 60%, #d3dfe6 66%, #dadbda 78%);
    color: #333;
}

.taskbar button {
    display: flex;
    align-items: center;
    justify-content: center;
}

.start {
    width: 45px;
}

.start svg {
    width: 16px;
    height: 16px;
    fill: #000;
}

.search {
    display: flex;
    align-items: center;
    gap: 10px;
    width: 321px;
    padding-left: 11px;
    margin: 1px 1px 0 0;
    background: #fff;
}

.search svg {
    width: 16px;
    height: 16px;
}

.search input {
    flex: 1;
    font-size: 13px;
    outline: none;
}

.search input::placeholder {
    color: #666;
}

.apps {
    display: flex;
}

.apps button {
    position: relative;
    width: 46px;
}

.apps svg {
    width: 24px;
    height: 24px;
}

.apps .running::after {
    content: "";
    position: absolute;
    left: 4px;
    right: 4px;
    bottom: 0;
    height: 2px;
    background: #1674ba;
}

.apps .active {
    background: #eceef3;
}

.apps .active::after {
    left: 0;
    right: 0;
}

.apps em {
    position: absolute;
    right: 8px;
    bottom: 7px;
    padding: 0 1px;
    border-radius: 7px;
    background: #d83c45;
    color: #fff;
    font: bold 9px/13px "Noto Sans", sans-serif;
}

.tray {
    display: flex;
    align-items: center;
    gap: 5px;
    margin-left: auto;
    padding-right: 20px;
}

.tray svg {
    width: 18px;
    height: 18px;
    fill: none;
    stroke: #333;
}

.weather {
    gap: 7px;
    margin-right: 7px;
    font-size: 13px;
}

.tray .weather svg {
    width: 24px;
    height: 24px;
    stroke: none;
}

.lang {
    margin-left: 4px;
}

.clock {
    display: flex;
    flex-direction: column;
    align-items: center;
    line-height: 17px;
    margin: 0 8px 0 4px;
}

.tray .notif {
    position: relative;
    width: 24px;
    height: 24px;
}

.notif em {
    position: absolute;
    right: -4px;
    bottom: -4px;
    width: 15px;
    height: 15px;
    border-radius: 50%;
    border: 1px solid #777;
    background: #d2d2d2;
    font: 10px/13px "Noto Sans", sans-serif;
}

/* stream caption over everything */
.caption {
    position: absolute;
    left: 0;
    top: 97px;
    margin: 0;
    font: 59px/68px "Liberation Sans", sans-serif;
    pointer-events: none;
}
```
FILE: roll.js
```
const ROW = 16.85;
const BAR = 201.6;
const BAR4 = 83;
const NAMES = ['C', 'C#', 'D', 'D#', 'E', 'F', 'F#', 'G', 'G#', 'A', 'A#', 'B'];

// semitones above C#5, which sits 268px under the top of the grid
const rowTop = n => Math.round(268 - n * ROW);
const nameOf = n => NAMES[((n + 1) % 12 + 12) % 12];
const rect = (x, y, w, h, fill) => `<rect x="${x}" y="${y}" width="${w}" height="${h}" fill="${fill}"/>`;

const notes = [
    ['F#5', 5, 0, 32], ['F#5', 5, 32, 252], ['C#5', 0, 285, 32], ['C#6', 12, 317, 16],
    ['C#5', 0, 334, 101], ['G5', 6, 435, 51, 1], ['G5', 6, 506, 59, 1], ['E5', 3, 586, 80, 1],
    ['C#5', 0, 687, 151], ['C#5', 0, 838, 114]
];
const ghostHigh = [33, 83, 286, 335, 487, 563, 587, 638, 688, 739, 790, 840, 890];
const ghostLow = [32, 82, 133, 158, 184, 234, 284, 334, 359, 385, 436, 486, 536, 561, 587, 638, 688, 738, 764, 789, 839, 890, 940];
const ghostVel = [[32, 4], [57, 3], [83, 5], [132, 3], [158, 4], [183, 5], [234, 4], [284, 4], [334, 4], [359, 3], [385, 4], [435, 4], [486, 4], [535, 3], [561, 5], [586, 4], [637, 4], [687, 4], [738, 4], [763, 3], [789, 5], [838, 4], [864, 3], [890, 4], [940, 3]];

function lines(height) {
    let s = '';
    for (let i = -6; i < 120; i++) {
        const x = Math.round(BAR4 + i * BAR / 12);
        const a = i % 12 === 0 ? 0.6 : i % 3 === 0 ? 0.4 : 0.22;
        s += rect(x, 0, 1, height, `rgba(20,0,40,${a})`);
    }
    return s;
}

function drawGrid() {
    let s = '';
    for (let n = -30; n <= 16; n++) {
        if (nameOf(n).includes('#')) s += rect(0, rowTop(n), 4000, 17, '#2d0044');
        else s += rect(0, rowTop(n), 4000, 1, 'rgba(20,0,40,.25)');
    }
    s += rect(0, 0, 284, 1200, 'rgba(255,255,255,.015)');
    const hl = (n, x, w, a) => rect(x, rowTop(n), w, 15, `rgba(160,120,190,${a})`);
    s += hl(15, 0, 687, .14) + hl(13, 0, 284, .14) + hl(13, 688, 4000, .14) + hl(12, 285, 402, .1);
    s += hl(6, 0, 4000, .15) + hl(5, 284, 4000, .14);
    s += lines(1200);
    ghostHigh.forEach(x => s += rect(x, 370, 12, 15, 'rgba(190,130,210,.1)'));
    ghostLow.forEach(x => s += rect(x, 387, 12, 15, 'rgba(190,130,210,.1)'));
    s += rect(279, 0, 2, 1200, 'rgba(170,110,190,.4)');
    s += '<path d="M687 200l5-6v4h4v-4l5 6-5 6v-4h-4v4z" fill="#5e3a78"/>';
    const g = document.getElementById('grid');
    g.innerHTML = `<svg>${s}</svg>` + notes.map(([t, n, x, w, alt]) =>
        `<div class="note${alt ? ' note-alt' : ''}" style="left:${x}px;width:${w}px;top:${rowTop(n)}px">${t}</div>`).join('')
        + '<svg><path d="M458 168l4-1 9 8 1 4-4 1-9-8z" fill="#fff" stroke="#333"/><path d="M461 170l8 7" stroke="#333" stroke-width="2"/></svg>';
}

function drawKeys() {
    const keys = document.getElementById('keys');
    let s = '<defs><linearGradient id="bk"><stop offset="0" stop-color="#2e3032"/><stop offset="1" stop-color="#454749"/></linearGradient></defs>';
    let labels = '';
    for (let n = -30; n <= 16; n++) {
        const name = nameOf(n), y = rowTop(n);
        if (y > keys.clientHeight) continue;
        if (name === 'C') {
            s += rect(0, y - 8, 67, 25, 'rgba(120,120,135,.4)');
            labels += `<span style="top:${y - 3}px">C${5 + Math.round((n + 1) / 12)}</span>`;
        }
        if (name === 'E' || name === 'B') s += rect(0, y, 67, 1, 'rgba(90,90,110,.15)');
        if (name.includes('#')) s += rect(0, y, 42, 17, 'url(#bk)');
    }
    keys.innerHTML = `<svg>${s}</svg>${labels}`;
}

function drawRuler() {
    const ruler = document.getElementById('ruler');
    let s = '';
    for (let b = 4; BAR4 + (b - 4) * BAR < ruler.clientWidth - 10; b++) {
        s += `<span style="left:${Math.round(BAR4 + (b - 4) * BAR)}px">${b}</span>`;
    }
    ruler.innerHTML = s;
    const o = [[0, 16, 152, '#8a3bb4'], [153, 10, 151, '#b14fdc'], [304, 16, 12, '#c65df0'], [317, 1, 5, '#c65df0'],
        [323, 16, 38, '#c65df0'], [361, 9, 19, '#d98a98'], [388, 9, 22, '#d98a98'], [418, 12, 30, '#d98a98'],
        [456, 16, 99, '#c65df0'], [555, 16, 53, '#7d35a5']];
    document.getElementById('overview').innerHTML =
        '<rect x="198" y="0" width="357" height="20" fill="#3c1c5c" stroke="#6b5088"/>' +
        o.map(([x, y, w, c]) => rect(x, y, w, 2, c)).join('');
}

function drawVelocity() {
    let s = lines(200) + rect(0, 27, 4000, 1, '#7d4c92') + rect(0, 60, 4000, 1, 'rgba(20,0,40,.4)') + rect(0, 90, 4000, 1, 'rgba(20,0,40,.4)');
    ghostVel.forEach(([x, w]) => {
        s += `<circle cx="${x}" cy="27" r="4" fill="#7d4c92"/>` + rect(x - w / 2, 27, w, 200, '#7d4c92');
    });
    notes.forEach(([t, n, x, w, alt]) => {
        const c = alt ? '#f0b4bc' : '#e78af4';
        s += rect(x, 1, w, 2, alt ? '#d99aa0' : '#d27ae2');
        if (x > 0) s += rect(x - 1, 2, 3, 200, c) + `<path d="M${x - 4} 1q1 4 4 4t4-4" fill="#7a2d80" stroke="${c}"/>`;
    });
    document.getElementById('velocity').insertAdjacentHTML('beforeend', `<svg>${s}</svg>`);
}

drawKeys();
drawRuler();
drawGrid();
drawVelocity();
```
